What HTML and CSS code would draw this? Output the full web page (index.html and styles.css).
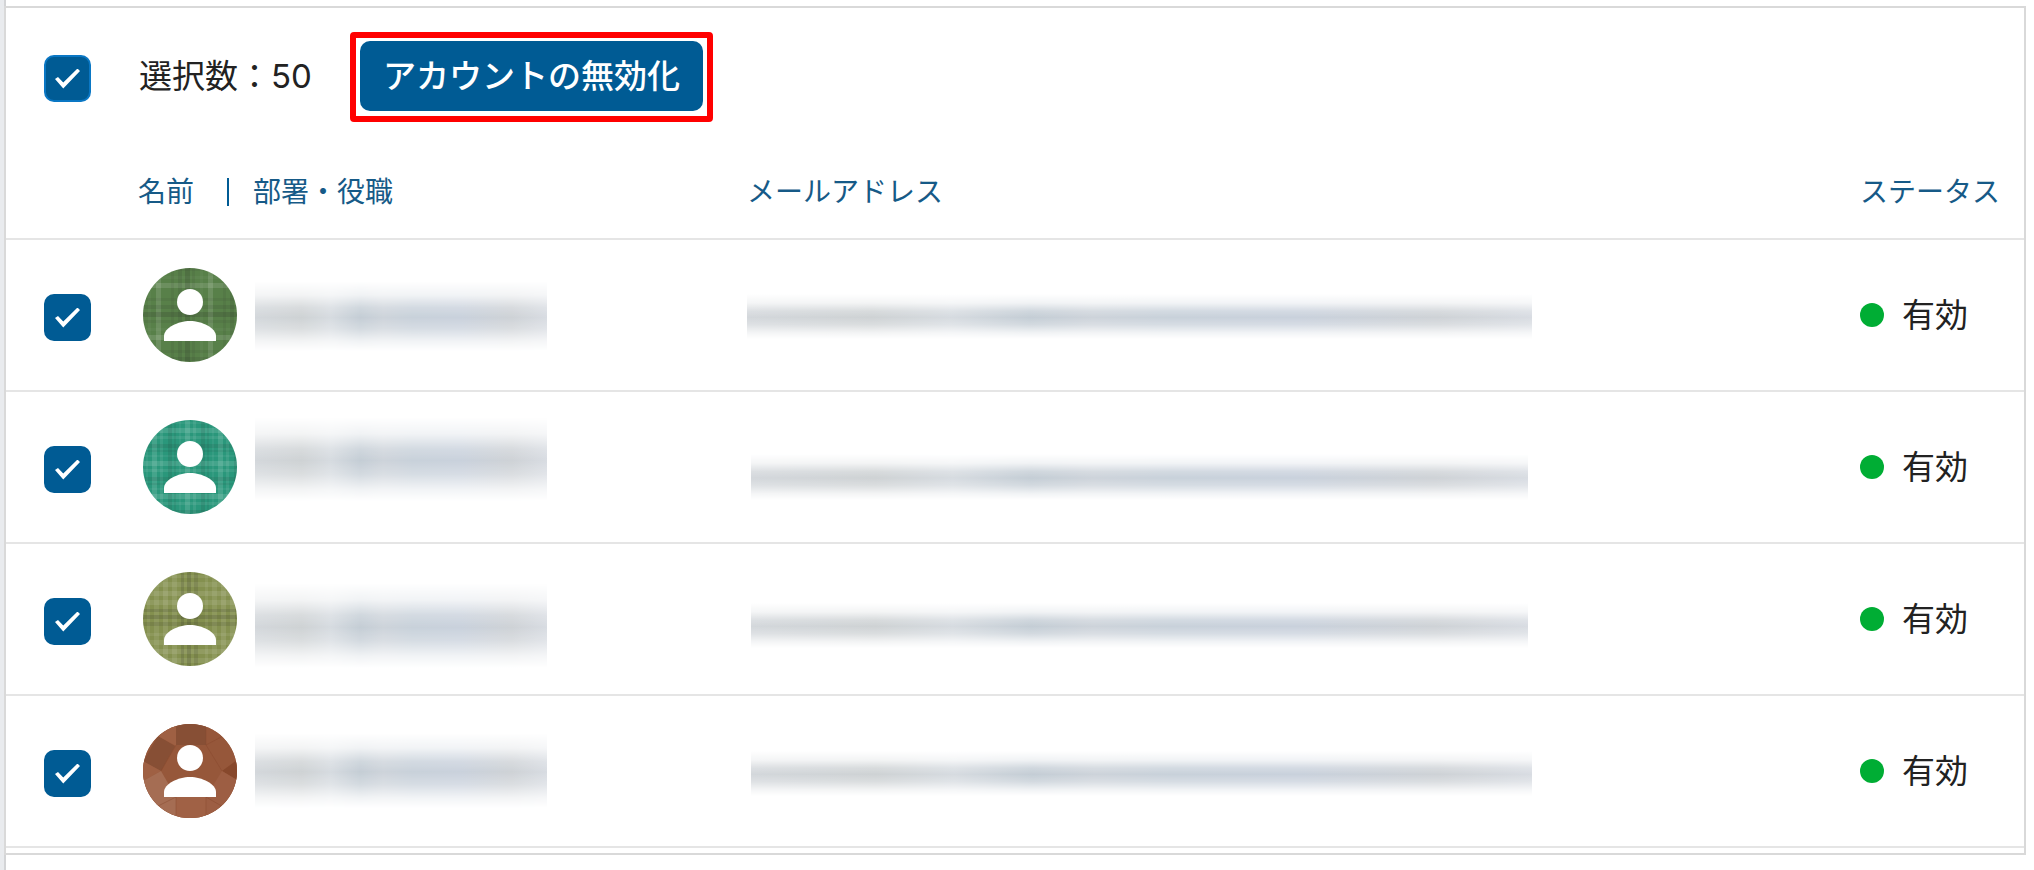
FILE: index.html
```
<!DOCTYPE html>
<html lang="ja">
<head>
<meta charset="UTF-8" />
<meta name="viewport" content="width=device-width, initial-scale=1" />
<title>アカウント管理</title>
<link rel="stylesheet" href="styles.css">
</head>
<body>

<main class="page">
  <section class="panel">
    <div class="toolbar">
      <input type="checkbox" class="check check-all" aria-label="すべて選択" checked />
      <p class="count">選択数：50</p>
      <div class="highlight">
        <button type="button" class="disable-btn">アカウントの無効化</button>
      </div>
    </div>

    <table class="accounts">
      <colgroup>
        <col class="col-check" />
        <col class="col-name" />
        <col />
        <col class="col-status" />
      </colgroup>
      <thead>
        <tr>
          <td></td>
          <th scope="col"><span class="name-head"><span>名前</span><span class="dept">部署・役職</span></span></th>
          <th scope="col">メールアドレス</th>
          <th scope="col">ステータス</th>
        </tr>
      </thead>
      <tbody id="rows"></tbody>
    </table>
  </section>
</main>

<!-- Shared avatar backgrounds -->
<svg class="defs" aria-hidden="true">
  <defs>
    <clipPath id="round"><circle cx="47" cy="47" r="47" /></clipPath>
    <pattern id="plaid" width="52" height="52" patternUnits="userSpaceOnUse" x="-5" y="0">
      <g fill="#fff">
        <rect x="18" width="5" height="52" opacity=".12" />
        <rect x="10" width="3" height="52" opacity=".03" />
        <rect y="15" width="52" height="5" opacity=".12" />
        <rect y="8" width="52" height="3" opacity=".03" />
      </g>
      <g fill="#222">
        <rect x="47" width="5" height="52" opacity=".16" />
        <rect x="40" width="4" height="52" opacity=".1" />
        <rect x="33" width="3" height="52" opacity=".08" />
        <rect x="2" width="3" height="52" opacity=".08" />
        <rect y="44" width="52" height="5" opacity=".16" />
        <rect y="37" width="52" height="4" opacity=".1" />
        <rect y="30" width="52" height="3" opacity=".08" />
        <rect y="0" width="52" height="3" opacity=".08" />
      </g>
    </pattern>
    <pattern id="weave" width="33" height="33" patternUnits="userSpaceOnUse" x="-3" y="-4">
      <g fill="#fff">
        <rect x="12" width="5" height="33" opacity=".12" />
        <rect x="20" width="3" height="33" opacity=".08" />
        <rect x="6" width="2" height="33" opacity=".05" />
        <rect y="12" width="33" height="5" opacity=".12" />
        <rect y="20" width="33" height="3" opacity=".08" />
        <rect y="6" width="33" height="2" opacity=".05" />
      </g>
      <g fill="#222">
        <rect x="28" width="4" height="33" opacity=".1" />
        <rect x="1" width="2" height="33" opacity=".07" />
        <rect y="28" width="33" height="4" opacity=".1" />
        <rect y="1" width="33" height="2" opacity=".07" />
      </g>
    </pattern>
    <pattern id="check" width="58" height="58" patternUnits="userSpaceOnUse" x="-8" y="-9">
      <g fill="#fff">
        <rect x="12" width="3" height="58" opacity=".07" />
        <rect x="19" width="5" height="58" opacity=".08" />
        <rect x="28" width="5" height="58" opacity=".1" />
        <rect x="37" width="5" height="58" opacity=".09" />
        <rect y="12" width="58" height="3" opacity=".07" />
        <rect y="19" width="58" height="5" opacity=".08" />
        <rect y="28" width="58" height="5" opacity=".1" />
        <rect y="37" width="58" height="5" opacity=".09" />
      </g>
      <g fill="#222">
        <rect x="46" width="3" height="58" opacity=".14" />
        <rect x="52" width="4" height="58" opacity=".16" />
        <rect x="1" width="4" height="58" opacity=".12" />
        <rect y="46" width="58" height="3" opacity=".14" />
        <rect y="52" width="58" height="4" opacity=".16" />
        <rect y="1" width="58" height="4" opacity=".12" />
      </g>
    </pattern>
    <g id="gems">
      <path d="M0 0H94V94H0Z" fill="#96573a" />
      <path d="M0 38L15 12L32 22L18 47Z" fill="#874f35" />
      <path d="M15 12L33 0V22Z" fill="#9f6043" />
      <path d="M33 0H63V21H33Z" fill="#874f35" />
      <path d="M94 36V56L79 47Z" fill="#87482c" />
      <path d="M0 37L18 47L0 57Z" fill="#9f6043" />
      <path d="M0 57L18 47L33 73V94H0Z" fill="#a56d53" />
      <path d="M33 73H63V94H33Z" fill="#a06145" />
      <path d="M94 56L79 47L63 73V94H94Z" fill="#9d5e43" />
      <path d="M33 73L15 82M63 73L82 84M33 73V94M63 73V94M63 21L82 11M63 0V21L79 47M33 21L18 47" fill="none" stroke="#87482c" stroke-opacity=".45" />
    </g>
    <g id="person" fill="#fff">
      <circle cx="47" cy="34" r="13" />
      <path d="M21 73V68C21 60 35 53 47 53S73 60 73 68V73Z" />
    </g>
    <linearGradient id="smear">
      <stop offset="0" stop-color="#d3d7db" />
      <stop offset=".16" stop-color="#ced2d4" />
      <stop offset=".26" stop-color="#d6dbe0" />
      <stop offset=".36" stop-color="#c4cdd5" />
      <stop offset=".44" stop-color="#cdd3da" />
      <stop offset=".54" stop-color="#c8d1da" />
      <stop offset=".7" stop-color="#c9d1dc" />
      <stop offset=".88" stop-color="#ced2d6" />
      <stop offset="1" stop-color="#d8dce2" />
    </linearGradient>
    <linearGradient id="fade" x2="0" y2="1">
      <stop offset="0" stop-color="#fff" stop-opacity="0" />
      <stop offset=".2" stop-color="#fff" stop-opacity=".25" />
      <stop offset=".38" stop-color="#fff" stop-opacity=".8" />
      <stop offset=".52" stop-color="#fff" />
      <stop offset=".68" stop-color="#fff" stop-opacity=".75" />
      <stop offset=".86" stop-color="#fff" stop-opacity=".25" />
      <stop offset="1" stop-color="#fff" stop-opacity="0" />
    </linearGradient>
    <mask id="soft" maskContentUnits="objectBoundingBox"><rect width="1" height="1" fill="url(#fade)" /></mask>
  </defs>
</svg>

<script>
  // name: [top, height], mail: [top, height, left, width] of the hidden text in its row
  const accounts = [
    { color: '#588049', fill: 'plaid', name: [41, 70], mail: [54, 45, 0, 785] },
    { color: '#2a977b', fill: 'weave', name: [25, 84], mail: [62, 46, 4, 777] },
    { color: '#84904f', fill: 'check', name: [39, 85], mail: [59, 45, 4, 777] },
    { color: '#96573a', fill: 'gems', name: [37, 75], mail: [55, 45, 4, 781] }
  ];

  function smear(x, y, width, height) {
    return `<svg class="smear" width="${x + width}" height="${y + height}" aria-hidden="true">
      <rect x="${x}" y="${y}" width="${width}" height="${height}" fill="url(#smear)" mask="url(#soft)" />
    </svg>`;
  }

  function avatar(a) {
    const texture = a.fill === 'gems'
      ? '<use href="#gems" />'
      : `<rect width="94" height="94" fill="url(#${a.fill})" />`;
    return `<svg class="avatar" viewBox="0 0 94 94" aria-hidden="true">
      <g clip-path="url(#round)"><rect width="94" height="94" fill="${a.color}" />${texture}</g>
      <use href="#person" />
    </svg>`;
  }

  document.getElementById('rows').innerHTML = accounts.map((a, i) => `
    <tr>
      <td class="cell-check"><input type="checkbox" class="check" aria-label="アカウント${i + 1}を選択" checked /></td>
      <td><div class="person">${avatar(a)}${smear(0, a.name[0], 292, a.name[1])}</div></td>
      <td><div class="mail">${smear(a.mail[2], a.mail[0], a.mail[3], a.mail[1])}</div></td>
      <td><span class="status">有効</span></td>
    </tr>`).join('');
</script>

</body>
</html>
```
FILE: styles.css
```
/* Base */
* {
  box-sizing: border-box;
}
body {
  margin: 0;
  background: #fff;
  color: #222;
  font-family: Inter, "Noto Sans CJK JP", sans-serif;
  font-size: 33px;
}

.page {
  min-height: 100vh;
  padding: 6px 8px 0 0;
  border-left: 4px solid #e9ebee;
  box-shadow: inset 2px 0 #d3d4d6;
}

.panel {
  border: 2px solid #d9d9d9;
  padding-bottom: 5px;
}

/* Toolbar */
.toolbar {
  display: flex;
  align-items: flex-start;
  height: 136px;
  padding: 24px 38px 0;
}
.count {
  width: 211px;
  margin: 20px 0 0 48px;
  line-height: 48px;
  white-space: nowrap;
}
.highlight {
  border: 6px solid #f00;
  border-radius: 4px;
  padding: 3px 4px 5px;
}
.disable-btn {
  display: block;
  height: 70px;
  padding: 0 23px 4px;
  border: 0;
  border-radius: 10px;
  background: #005b94;
  color: #fff;
  font: 500 33px/66px "Noto Sans CJK JP", sans-serif;
  white-space: nowrap;
  cursor: pointer;
}

/* Checkbox */
.check {
  appearance: none;
  display: grid;
  place-items: center;
  width: 47px;
  height: 47px;
  margin: 0;
  border-radius: 10px;
  background: #005b94;
  cursor: pointer;
}
.check:checked::before {
  content: "";
  width: 25px;
  height: 20px;
  background: #fff;
  clip-path: polygon(0 52%, 12% 42%, 33% 70%, 90% 0, 100% 12%, 33% 100%);
}
.check-all {
  margin-top: 23px;
  border: 2px solid #0a77c4;
}

/* Table */
.accounts {
  width: 100%;
  border-collapse: collapse;
  table-layout: fixed;
}
.col-check {
  width: 132px;
}
.col-name {
  width: 609px;
}
.col-status {
  width: 164px;
}
.accounts td,
.accounts th {
  padding: 0;
  border-bottom: 2px solid #e5e5e5;
  text-align: left;
  vertical-align: top;
}
.accounts thead tr {
  height: 95px;
}
.accounts th {
  padding-top: 28px;
  color: #165a87;
  font-size: 28px;
  font-weight: 400;
  line-height: 40px;
  white-space: nowrap;
}
.name-head {
  display: flex;
  align-items: center;
  gap: 33px;
}
.dept {
  padding-left: 24px;
  border-left: 2px solid #005b94;
  line-height: 28px;
}
.accounts tbody tr {
  height: 152px;
}
.cell-check .check {
  margin: 54px 0 0 38px;
}
.person {
  display: flex;
  align-items: flex-start;
  gap: 18px;
  padding-left: 5px;
}
.avatar {
  flex: none;
  width: 94px;
  height: 94px;
  margin-top: 28px;
}
.smear {
  display: block;
  flex: none;
}
.status {
  display: flex;
  align-items: center;
  gap: 18px;
  margin-top: 51px;
  line-height: 48px;
  white-space: nowrap;
}
.status::before {
  content: "";
  width: 24px;
  height: 24px;
  border-radius: 50%;
  background: #00ad34;
}

.defs {
  position: absolute;
  width: 0;
  height: 0;
}
```
